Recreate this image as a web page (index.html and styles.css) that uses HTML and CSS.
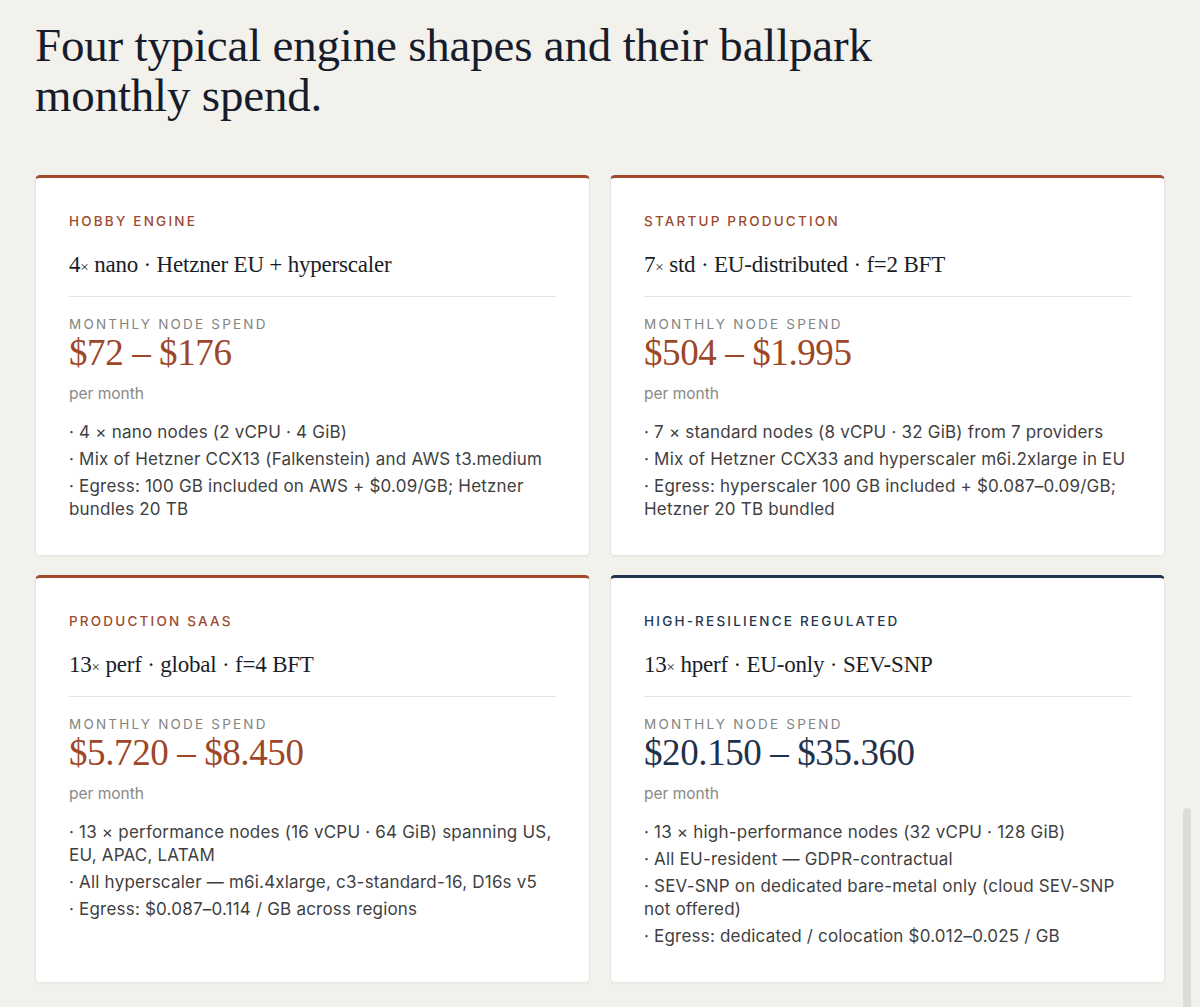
FILE: index.html
```html
<!DOCTYPE html>
<html lang="en">
<head>
<meta charset="utf-8">
<title>Engine shapes</title>
<link rel="stylesheet" href="styles.css">
</head>
<body>
<main class="page">
  <h1 class="title">Four typical engine shapes and their ballpark monthly spend.</h1>
  <section class="grid">
    <article class="card">
      <div class="label">Hobby engine</div>
      <div class="shape">4<span class="x">×</span> nano · Hetzner EU + hyperscaler</div>
      <div class="meta">Monthly node spend</div>
      <div class="price">$72 – $176</div>
      <div class="per">per month</div>
      <ul class="notes">
        <li>· 4 × nano nodes (2 vCPU · 4 GiB)</li>
        <li>· Mix of Hetzner CCX13 (Falkenstein) and AWS t3.medium</li>
        <li>· Egress: 100 GB included on AWS + $0.09/GB; Hetzner bundles 20 TB</li>
      </ul>
    </article>
    <article class="card">
      <div class="label">Startup production</div>
      <div class="shape">7<span class="x">×</span> std · EU-distributed · f=2 BFT</div>
      <div class="meta">Monthly node spend</div>
      <div class="price">$504 – $1.995</div>
      <div class="per">per month</div>
      <ul class="notes">
        <li>· 7 × standard nodes (8 vCPU · 32 GiB) from 7 providers</li>
        <li>· Mix of Hetzner CCX33 and hyperscaler m6i.2xlarge in EU</li>
        <li>· Egress: hyperscaler 100 GB included + $0.087–0.09/GB; Hetzner 20 TB bundled</li>
      </ul>
    </article>
    <article class="card">
      <div class="label">Production SaaS</div>
      <div class="shape">13<span class="x">×</span> perf · global · f=4 BFT</div>
      <div class="meta">Monthly node spend</div>
      <div class="price">$5.720 – $8.450</div>
      <div class="per">per month</div>
      <ul class="notes">
        <li>· 13 × performance nodes (16 vCPU · 64 GiB) spanning US, EU, APAC, LATAM</li>
        <li>· All hyperscaler — m6i.4xlarge, c3-standard-16, D16s v5</li>
        <li>· Egress: $0.087–0.114 / GB across regions</li>
      </ul>
    </article>
    <article class="card card-navy">
      <div class="label">High-resilience regulated</div>
      <div class="shape">13<span class="x">×</span> hperf · EU-only · SEV-SNP</div>
      <div class="meta">Monthly node spend</div>
      <div class="price">$20.150 – $35.360</div>
      <div class="per">per month</div>
      <ul class="notes">
        <li>· 13 × high-performance nodes (32 vCPU · 128 GiB)</li>
        <li>· All EU-resident — GDPR-contractual</li>
        <li>· SEV-SNP on dedicated bare-metal only (cloud SEV-SNP not offered)</li>
        <li>· Egress: dedicated / colocation $0.012–0.025 / GB</li>
      </ul>
    </article>
  </section>
</main>
<div class="scrollthumb"></div>
</body>
</html>
```

FILE: styles.css
```css
html, body {
  margin: 0;
  padding: 0;
  background: #f3f1eb;
}
body {
  font-family: Inter, "Liberation Sans", sans-serif;
  color: #3b3b3b;
}
.page {
  padding: 20px 35px 40px;
}
.title {
  margin: 0;
  max-width: 900px;
  font-family: "Liberation Serif", "DejaVu Serif", serif;
  font-weight: 400;
  font-size: 47px;
  line-height: 50px;
  color: #161c2b;
  letter-spacing: -0.2px;
}
.grid {
  margin-top: 55px;
  display: grid;
  grid-template-columns: 1fr 1fr;
  gap: 19px 20px;
}
.card {
  background: #ffffff;
  border: 1px solid #e7e4dd;
  border-top: 3px solid #a2492c;
  border-radius: 5px;
  box-shadow: 0 1px 2px rgba(0, 0, 0, 0.04);
  padding: 33px 33px 34px;
}
.label {
  font-size: 13.5px;
  line-height: 20px;
  letter-spacing: 2.2px;
  text-transform: uppercase;
  color: #9c4a2f;
  font-weight: 500;
}
.card-navy { border-top-color: #1f324d; }
.card-navy .label { color: #253750; }
.card-navy .price { color: #1f324d; }
.shape {
  margin-top: 19px;
  padding-bottom: 14px;
  border-bottom: 1px solid #e4e2dc;
  font-family: "Liberation Serif", "DejaVu Serif", serif;
  font-size: 23px;
  line-height: 29px;
  color: #1a1d26;
  letter-spacing: -0.2px;
}
.x {
  font-size: 15px;
}
.meta {
  margin-top: 18px;
  font-size: 13.5px;
  line-height: 18px;
  letter-spacing: 2.2px;
  text-transform: uppercase;
  color: #85847f;
}
.price {
  font-family: "Liberation Serif", "DejaVu Serif", serif;
  font-size: 37px;
  line-height: 39px;
  color: #9d4628;
  letter-spacing: -0.4px;
}
.per {
  margin-top: 11px;
  font-size: 15.5px;
  line-height: 22px;
  color: #8a8985;
}
.notes {
  list-style: none;
  margin: 16px 0 0;
  padding: 0;
  font-size: 17px;
  line-height: 23px;
  letter-spacing: 0.2px;
  color: #3f3f3f;
}
.notes li + li {
  margin-top: 4px;
}
.scrollthumb {
  position: fixed;
  right: 9px;
  top: 808px;
  bottom: -10px;
  width: 8px;
  border-radius: 4px;
  background: #dddcd6;
}
```
